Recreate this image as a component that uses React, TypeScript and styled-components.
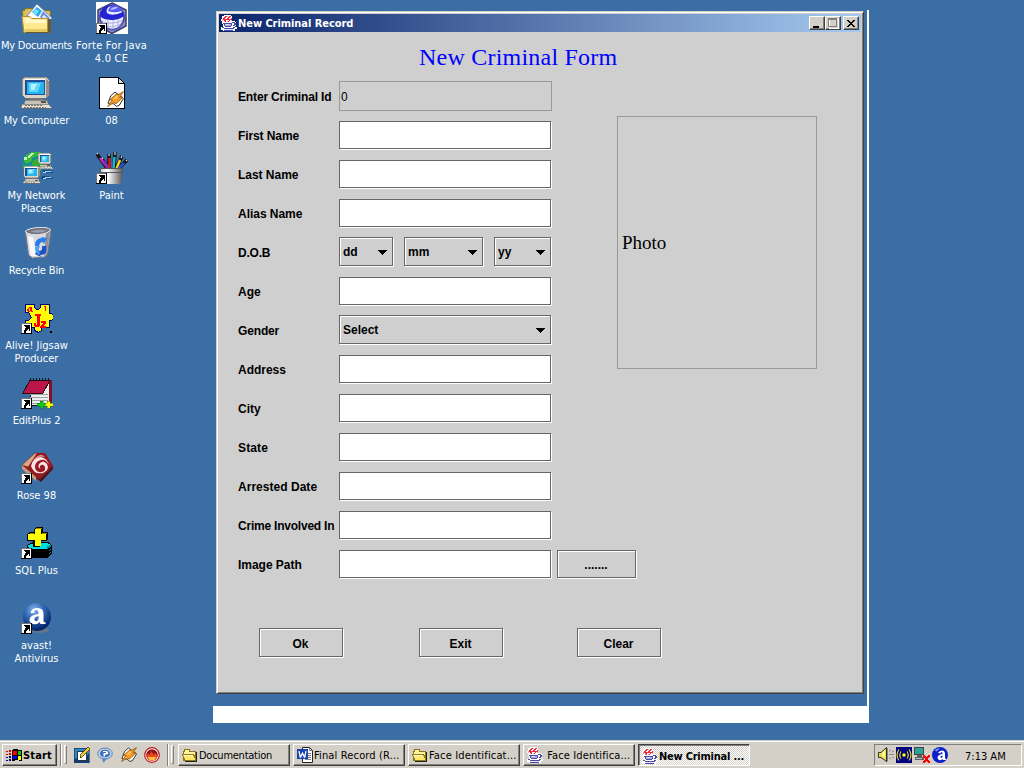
import React from "react";
import styled, { createGlobalStyle, css } from "styled-components";

const ui = `"DejaVu Sans Condensed", "DejaVu Sans", sans-serif`;
const face = "#d4d0c8";
const panel = "#cfcfcf";

const Global = createGlobalStyle`
  * { box-sizing: border-box; }
  body { margin: 0; overflow: hidden; background: #3a6ea5; }
  button, input { font: inherit; color: inherit; margin: 0; padding: 0; border-radius: 0; outline: 0; }
  svg { display: block; flex: none; }
`;

const Screen = styled.div`
  width: 1024px;
  height: 768px;
  display: flex;
  flex-direction: column;
  background: #3a6ea5;
  font: 11px/13px ${ui};
  color: #000;
`;
const Desktop = styled.main`
  height: 740px;
  display: flex;
  align-items: flex-start;
`;
const Shortcuts = styled.div`
  display: grid;
  grid-template-rows: repeat(9, 75px);
  grid-auto-flow: column;
  grid-auto-columns: 75px;
  width: 150px;
  margin-left: -1px;
`;
const Shortcut = styled.div`
  display: flex;
  flex-direction: column;
  align-items: center;
  padding-top: 2px;
  color: #fff;
`;
const ShortcutName = styled.span<{ $track?: number }>`
  margin-top: 5px;
  text-align: center;
  white-space: pre;
  letter-spacing: ${(p) => p.$track ?? 0}px;
`;

const Backdrop = styled.div`
  width: 656px;
  height: 713px;
  margin: 10px 0 0 64px;
  padding: 1px 0 0 3px;
  border-right: 2px solid #fff;
  border-bottom: 17px solid #fff;
`;
const Window = styled.section`
  width: 648px;
  height: 683px;
  padding: 1px;
  border: 1px solid;
  border-color: ${face} #404040 #404040 ${face};
  background: ${panel};
  box-shadow: inset 1px 1px #fff, inset -1px -1px #808080;
`;
const TitleBar = styled.header`
  height: 18px;
  margin: 1px 1px 0 1px;
  padding: 0 2px;
  display: flex;
  align-items: center;
  background: linear-gradient(90deg, #0a246a, #a6caf0);
  color: #fff;
  font-weight: bold;
`;
const TitleText = styled.span`
  flex: 1;
  padding-left: 1px;
  letter-spacing: -0.05px;
`;
const Control = styled.button<{ $gap?: boolean }>`
  width: 16px;
  height: 14px;
  margin-left: ${(p) => (p.$gap ? 2 : 0)}px;
  border: 1px solid;
  border-color: #fff #404040 #404040 #fff;
  box-shadow: inset -1px -1px #808080;
  background: ${face};
`;
const Client = styled.div`
  height: 659px;
  padding: 10px 45px 0 20px;
  font: bold 12px/15px "Liberation Sans", Arial, sans-serif;
`;
const Heading = styled.h1`
  margin: 0 0 9px 181px;
  font: 24px/30px "Liberation Serif", "Times New Roman", serif;
  letter-spacing: 0.22px;
  color: #0000ff;
`;
const Columns = styled.div`
  display: flex;
  justify-content: space-between;
  align-items: flex-start;
`;
const Form = styled.form`
  width: 370px;
  display: grid;
  grid-auto-rows: 39px;
`;
const Row = styled.div`
  display: grid;
  grid-template-columns: 101px 1fr;
  align-items: start;
`;
const Label = styled.label<{ $track?: number }>`
  padding-top: 9px;
  white-space: nowrap;
  letter-spacing: ${(p) => p.$track ?? -0.03}px;
`;
const Controls = styled.div`
  display: flex;
  align-items: flex-start;
`;
const flush = css`
  border: 1px solid #666;
  box-shadow: 1px 1px #fff, inset 1px 1px #fff;
`;
const Field = styled.input`
  width: 212px;
  height: 28px;
  margin-top: 1px;
  background: #fff;
  ${flush}
`;
const IdField = styled.input`
  width: 213px;
  height: 30px;
  border: 1px solid #999;
  padding: 2px 0 0 1px;
  background: ${panel};
  color: #000;
  font-weight: normal;
`;
const Combo = styled.div<{ $w: number; $gap?: number }>`
  width: ${(p) => p.$w}px;
  height: 29px;
  margin-right: ${(p) => p.$gap ?? 0}px;
  padding: 1px 5px 0 3px;
  display: flex;
  align-items: center;
  justify-content: space-between;
  ${flush}
`;
const Push = styled.button<{ $w: number; $h?: number }>`
  width: ${(p) => p.$w}px;
  height: ${(p) => p.$h ?? 29}px;
  padding-top: 3px;
  padding-right: 1px;
  background: ${panel};
  ${flush}
`;
const Browse = styled(Push)`
  margin: 1px 0 0 6px;
`;
const Photo = styled.div`
  width: 200px;
  height: 253px;
  margin-top: 35px;
  padding-left: 4px;
  display: flex;
  align-items: center;
  border: 1px solid #999;
  font: 19px/22px "Liberation Serif", "Times New Roman", serif;
`;
const Actions = styled.div`
  display: flex;
  margin: 40px 0 0 21px;
`;
const Action = styled(Push)<{ $after?: number }>`
  margin-right: ${(p) => p.$after ?? 0}px;
`;

const Taskbar = styled.footer`
  height: 28px;
  display: flex;
  align-items: flex-start;
  padding: 4px 2px 0;
  background: ${face};
  box-shadow: inset 0 1px ${face}, inset 0 2px #fff;
`;
const raised = css`
  border: 1px solid;
  border-color: #fff #404040 #404040 #fff;
  box-shadow: inset -1px -1px #808080;
  background: ${face};
`;
const Start = styled.button`
  width: 55px;
  height: 22px;
  display: flex;
  align-items: center;
  padding-left: 3px;
  font-weight: bold;
  letter-spacing: 0.15px;
  ${raised}
`;
const Divider = styled.i<{ $l: number }>`
  width: 2px;
  height: 22px;
  margin-left: ${(p) => p.$l}px;
  border-left: 1px solid #808080;
  border-right: 1px solid #fff;
`;
const Grip = styled.i`
  width: 3px;
  height: 19px;
  margin: 1px 0 0 2px;
  border: 1px solid;
  border-color: #fff #808080 #808080 #fff;
`;
const Quick = styled.div`
  display: flex;
  width: 93px;
  padding: 3px 0 0 7px;
  justify-content: space-between;
`;
const Tasks = styled.div`
  display: flex;
  gap: 3px;
  margin-left: 4px;
`;
const Task = styled.button<{ $active?: boolean }>`
  width: 112px;
  height: 22px;
  display: flex;
  align-items: center;
  gap: 1px;
  padding-left: 3px;
  white-space: nowrap;
  ${raised}
  ${(p) =>
    p.$active &&
    css`
      font-weight: bold;
      padding-top: 2px;
      border-color: #404040 #fff #fff #404040;
      box-shadow: inset 1px 1px #808080;
      background: repeating-conic-gradient(#fff 0 25%, ${face} 0 50%) 0 0 / 2px 2px;
    `}
`;
const TaskText = styled.span<{ $track?: number }>`
  letter-spacing: ${(p) => p.$track ?? 0}px;
`;
const Tray = styled.div`
  width: 148px;
  height: 22px;
  margin-left: auto;
  display: flex;
  align-items: center;
  gap: 2px;
  padding-left: 3px;
  border: 1px solid;
  border-color: #808080 #fff #fff #808080;
`;
const Clock = styled.time`
  margin: 2px 0 0 15px;
`;

function Icon({ size = 32, smooth, children }: { size?: number; smooth?: boolean; children: React.ReactNode }) {
  return (
    <svg width={size} height={size} viewBox={`0 0 ${size} ${size}`} shapeRendering={smooth ? "auto" : "crispEdges"}>
      {children}
    </svg>
  );
}
const LinkArrow = () => (
  <g shapeRendering="crispEdges">
    <path d="M0 21h11v11H0z" fill="#000" />
    <path d="M0 21h10v10H0z" fill="#fff" />
    <path d="M0 21h11v1H1v9h10v1H0z" fill="#000" opacity=".55" />
    <path d="M3 23h6v6H8v-2H7v1H6v1H5v2H3v-3h1v-2h1v-1H4v-1H3z" fill="#000" />
  </g>
);
const Documents = () => (
  <Icon smooth>
    <path d="M1.500 8.500h2l1-2h7l1 2h16l1 2v20h-27z" fill="#d9c05c" stroke="#86751f" />
    <path d="M6 14L16 2l15 14-8 9z" fill="#fff" stroke="#7187b8" />
    <path d="M11 10l5-5 5 4-4 6z" fill="#2aa8ee" /><path d="M15 7l3 2-3 4-3-3z" fill="#6fe5ff" />
    <path d="M22 9l7 7-4 5-6-6z" fill="#6f93dc" /><path d="M23 13l3 3-2 2-3-3z" fill="#e9f2ff" />
    <path d="M1 14.500h8l2 2h15.500v14H3z" fill="#ffe98e" stroke="#b2943a" />
    <path d="M3 16h5l2 2h15v3H4z" fill="#fff8cc" /><path d="M4 27h22v3H4z" fill="#e6c860" />
    <path d="M27 17h3v12l-2 2H5v-1h22z" fill="#655a31" />
  </Icon>
);
const Monitor = () => (
  <g>
    <path d="M1 2l3-2h21l3 3v15l-3 3H4l-3-3z" fill="#d9d5ca" stroke="#77736d" strokeWidth=".7" />
    <path d="M25 2l3 2v14l-3 2z" fill="#958f87" /><path d="M4 3h20v15H4z" fill="#234e95" />
    <path d="M6 5h17v12H6z" fill="#27b4ec" /><path d="M8 6h12l-3 9H8z" fill="#5fd8fb" />
    <path d="M10 7h6l-3 6h-3z" fill="#b4f4ff" /><path d="M4 2h20v1H4z" fill="#fff" />
    <path d="M8 21h14v3H8z" fill="#77736f" /><path d="M4 23h22l2 5H3z" fill="#c9c4b8" stroke="#666" strokeWidth=".6" />
    <path d="M1 27h26l4 4H0z" fill="#e5e0d2" stroke="#6d6a66" strokeWidth=".7" />
    <path d="M4 28.500h18M3 30.500h22" stroke="#77736f" strokeDasharray="2 1" /><path d="M20 24h5v2h-5z" fill="#555" />
  </g>
);
const Computer = () => <Icon><Monitor /></Icon>;
const Network = () => (
  <Icon>
    <circle cx="11" cy="11" r="10.5" fill="#158a9b" /><path d="M5 3l6-3h8l-2 4-5 1-2 5-5 2-2-2z" fill="#39b83a" />
    <path d="M12 8l6-2 4 6-3 8-4-5-4-2z" fill="#37ad30" /><path d="M3 5h3v3H3zm3 0l5-4h2L8 6z" fill="#c7f4b4" />
    <path d="M1 12l5 2 4 6-7-3z" fill="#2cae4c" />
    <svg x="17" y="1" width="15" height="16" viewBox="0 0 32 32" preserveAspectRatio="none"><Monitor /></svg>
    <svg x="2" y="14" width="19" height="18" viewBox="0 0 32 32" preserveAspectRatio="none"><Monitor /></svg>
    <path d="M22 18h9l-4 2h5v1h-9zM21 24h8l-4 2h7v1H20z" fill="#154a7c" /><path d="M22 21l5-2h3M22 27l5-2h3" stroke="#9edaff" fill="none" />
  </Icon>
);
const Recycle = () => (
  <Icon smooth>
    <path d="M4.500 5l3 23 4 3 12-1 3-3L30 3z" fill="#d8d8de" stroke="#777783" />
    <path d="M7 9l3 20h5L12 10z" fill="#fafafc" /><path d="M25 6l4-2-3 23-3 2z" fill="#908f9c" />
    <path d="M4.500 4q4-3 13-3.500t12 2q-2 4-11 5T4.500 5z" fill="#70717c" stroke="#e6e6ec" />
    <path d="M9 4.500q8-3 17-1-8 4-17 1z" fill="#9c9dab" />
    <path d="M14 19q0-8 7-8l-1-1 6 1-3 6-1-2q-4 0-4 5z" fill="#2b7bea" />
    <path d="M25 19q2 9-6 9l1 2-6-3 3-5 1 2q4 0 3-5z" fill="#1c50c8" /><path d="M14 20l5-1-2 4q0 2 2 2l-1 3q-4-2-4-8z" fill="#45a5f2" />
  </Icon>
);
const Jigsaw = () => (
  <Icon>
    <path d="M4.500 2.500h9v3l2 2h2l2-2v-3h9v9h2l2 2v3l-2 2h-2v7h-8v3l-3 2-4-2v-3h-9v-7h3l3-3-3-5h-3z" fill="#ffff00" stroke="#000080" />
    <path d="M14 12h6v2h-1v9l-2 2h-3l-1-2v-2h2v2h1v-9h-2z" fill="#f00" />
    <path d="M20 19h5v2l-3 3h3v2h-6v-2l3-3h-2zM7 6h1V5h3v4h1v1h-2V9H9v1H7V9H6V7h1zM8 6v3h1V6zM23 4h2v5h-1V5h-1z" fill="#f00" />
    <path d="M29 29h2v2h-2z" /><LinkArrow />
  </Icon>
);
const EditPlus = () => (
  <Icon>
    <path d="M12 3h18v25H8z" fill="#eee" stroke="#111" /><path d="M28 3h3v24h-3z" fill="#840e25" />
    <path d="M9 17.500h18M9 20.500h18M9 23.500h18M9 26.500h18" stroke="#a2a2a2" />
    <path d="M9 3h20l-7 13H2z" fill="#cc103f" stroke="#261016" />
    <path d="M9 4.500h18M8 6.500h18M7 8.500h18M6 10.500h18M5 12.500h18M4 14.500h18" stroke="#872269" strokeDasharray="1 1" />
    <path d="M9.500 1v3M12.500 1v3M15.500 1v3M18.500 1v3M21.500 1v3M24.500 1v3M27.500 1v3" stroke="#111" />
    <path d="M20 24h2v2h2v3h-2v2h-3v-2h-3v-3h3v-2z" fill="#10c91d" stroke="#0a7410" strokeWidth=".5" /><path d="M27 24h2v2h3v3h-3v2h-3v-2h-2v-3h2v-2z" fill="#ff0" stroke="#167b13" strokeWidth=".5" />
    <LinkArrow />
  </Icon>
);
const Rose = () => (
  <Icon smooth>
    <path d="M1 13L14 1h10l8 13-13 13h-6z" fill="#8d1d21" /><path d="M1 13l6 2L19 2l-5-1z" fill="#d7a987" stroke="#6d2a20" strokeWidth=".6" />
    <path d="M1 13l14 12v4L1 17z" fill="#c9997b" /><path d="M16 1h8l8 13-13 12L7 15z" fill="#961a22" />
    <path d="M10 14q2-9 10-9 6 1 8 8-3-6-8-5t-6 6q0 7 7 6 4-1 3-5-2-4-5-1-1 2 1 3-4-1-2-5 4-5 8 0 3 6-4 9-9 2-12-7z" fill="#ffe1df" />
    <path d="M12 8q4-5 9-5l3 2q-7-2-12 3z" fill="#e9a4a4" /><path d="M19 27l13-13v3L20 30l-5-4z" fill="#541014" />
    <LinkArrow />
  </Icon>
);
const Sql = () => (
  <Icon>
    {[24, 21, 18].map((y) => (
      <g key={y}>
        <path d={`M6 ${y}l6-3h15l4 3v3l-5 4H11l-5-3z`} fill="#000" />
        <path d={`M7 ${y}l6-2h13l4 2v1l-5 3H12l-5-2z`} fill="#00e0e0" />
        <path d={`M26 ${y + 1}l4-1v2l-4 2z`} fill="#008c8c" />
      </g>
    ))}
    <path d="M13 2l2-2h7v5h5v7l-2 2h-5v5l-2 1h-6v-6H6V7l2-2h5z" fill="#000" />
    <path d="M15 1h6v1h-6zM9 6h4v1H9zM21 6h5v1h-5z" fill="#9c9200" />
    <path d="M14 2h6v5h5v6h-5v6h-6v-6H7V7h7z" fill="#ff0" />
    <LinkArrow />
  </Icon>
);
const Avast = () => (
  <Icon smooth>
    <defs><radialGradient id="ball" cx=".4" cy=".25" r=".7"><stop stopColor="#86b4ea" /><stop offset=".5" stopColor="#2f66b4" /><stop offset="1" stopColor="#05266b" /></radialGradient></defs>
    <ellipse cx="18" cy="28" rx="10" ry="3" fill="#777" opacity=".7" />
    <circle cx="16" cy="15" r="14" fill="url(#ball)" />
    <path d="M9.500 11q1-5 7-5t6 6v7q0 2 2 1v2h-5l-1-2q-2 3-6 2t-4-4q0-5 9-6 0-4-2-4-3 0-2 3h-4zM17.500 14q-5 1-4 4 2 3 4-1z" fill="#fff" fillRule="evenodd" />
    <LinkArrow />
  </Icon>
);
const Forte = () => (
  <Icon smooth>
    <path d="M0 0h32v32H0z" fill="#fff" />
    <path d="M16 1l14 7v16l-14 7.500L2 24V8z" fill="#8f92ba" stroke="#3b3d70" strokeWidth="1.500" />
    <circle cx="16" cy="15.500" r="12" fill="#eceeff" stroke="#3436b4" strokeWidth="1.500" />
    <path d="M4 14Q4 4 15 3q-6 4-4 8 5 4 16-1l1 4q-5 4-12 4-9 0-12-4z" fill="#2424d2" />
    <path d="M12 9q1-6 8-6 5 2 7 5-7 4-15 1z" fill="#5158f4" /><path d="M14 8q3-4 8-3-2 3-8 3z" fill="#b4baff" />
    <path d="M6 19q9 5 21-1M8 23q8 4 17-1M12 17v9M17 18v9M22 17v8" fill="none" stroke="#a9acdd" strokeWidth=".9" />
    <path d="M5 19q5 9 12 9t10-9" fill="none" stroke="#5a5dc0" strokeWidth="1.500" /><LinkArrow />
  </Icon>
);
const Bolt = () => (
  <g>
    <path d="M3.500 4.500l4-3.500 2 1.500L13.500 5l2 2-4 6.500-2.500 1L6 12l-5-.5z" fill="#fff" stroke="#222" strokeWidth=".9" />
    <path d="M.5 14.500L5 8.500H2.500L8.500 3l2 .5 5-3-3.500 5.500h3L8.500 12l-2-1z" fill="#f59b20" stroke="#8a4d08" strokeWidth=".7" />
    <path d="M5 8l4-4 1.500.5L9 7.500z" fill="#ffc659" />
  </g>
);
const FileIcon = () => (
  <Icon>
    <path d="M3.500.5h19l6 6v25h-25z" fill="#fff" stroke="#000" /><path d="M22.500.5v6h6z" fill="#ddd" stroke="#000" />
    <svg x="11" y="14" width="17" height="17" viewBox="0 0 16 16" shapeRendering="auto"><Bolt /></svg>
  </Icon>
);
const Paint = () => (
  <Icon smooth>
    <g stroke="#161616" strokeWidth="3.600" fill="none">
      <path d="M1 2l10 14" /><path d="M6 7l8 10" /><path d="M13 2v15" /><path d="M19 0l-1 17" /><path d="M26 4l-6 13" /><path d="M31 8l-9 9" />
    </g>
    <g strokeWidth="2.400" fill="none">
      <path d="M4 6l8 10" stroke="#d820d8" /><path d="M8 9l5 8" stroke="#7a30c0" /><path d="M13.500 6v11" stroke="#e31424" />
      <path d="M18.500 5l-1 12" stroke="#18b7d4" /><path d="M24 8l-4 10" stroke="#f3da22" /><path d="M28 11l-7 7" stroke="#2c55e0" />
    </g>
    <path d="M1 1l1 1M6 6l1 1M13 2v2M19 0v3M26 4l-1 2M31 8l-1 1" stroke="#dcdcdc" strokeWidth="1.200" />
    <defs><linearGradient id="cup"><stop stopColor="#c8c8c8" /><stop offset=".3" stopColor="#fff" /><stop offset="1" stopColor="#5e5e5e" /></linearGradient></defs>
    <path d="M6 20h20v9l-2 3H8l-2-3z" fill="url(#cup)" /><path d="M4.500 16.500h22v4h-22z" fill="url(#cup)" stroke="#555" /><LinkArrow />
  </Icon>
);
const Java = () => (
  <Icon size={16}>
    <path d="M1 1h2V0h7v1h1v5h3v1h1v4h-1v1h2v2h-2v2H2v-1H0v-3h2V9H1V6H0V4h1z" fill="#fff" />
    <path d="M2 3h1V2h1V1h2v1H5v1H4v2h1v2H4V6H3V5H2zM6 3h1V2h1V1h2v1H9v1H8v1h2v1H9v1H8v1H7V6h1V5H6zM4 4h2v1H4zM10 3h1v2h-1z" fill="#ee2b3e" />
    <path d="M1 4h1v2H1zM3 6h1v1H3zM6 1h1v1H6zM6 6h1v1H6zM10 5h1v1h-1z" fill="#f7a2aa" />
    <path d="M2 8h9V7h3v1h1v2h-1v1h-2v-1h1V8h-2v3h-1v1H4v-1H3V9H2zM1 12h2v1h9v-1h2v1h-1v1H3v-1H1zM3 15h9v1H3z" fill="#4b4ba8" />
    <path d="M4 9h6v2H4z" fill="#a9a9dc" /><path d="M5 9h3v1H5zM4 14h8v1H4z" fill="#e2e2fa" />
  </Icon>
);
const Flag = () => (
  <svg width="17" height="16" viewBox="0 0 17 16" shapeRendering="crispEdges">
    <path d="M6 3h1V2h5v1h4v11h-3v-1H9v1H6z" fill="#000" />
    <path d="M7 4h4v4H7z" fill="#f00" /><path d="M12 4h3v4h-3z" fill="#0c0" /><path d="M7 9h4v3H7z" fill="#00f" /><path d="M12 9h3v4h-3z" fill="#ff0" />
    <path d="M0 4h2v1H0zm3-1h2v2H3zM0 7h2v1H0zm3-1h2v2H3z" fill="#d00" /><path d="M0 10h2v1H0zm3-1h2v2H3zM0 13h2v1H0zm3-1h2v2H3z" fill="#008" />
  </svg>
);
const Folder = () => (
  <Icon size={16}>
    <path d="M1.500 4.500h1v-2h5v2h6v9h-12z" fill="#fff29a" stroke="#86751f" /><path d="M.5 7.500h11l3 6H3z" fill="#ffe866" stroke="#8c7a1c" />
    <path d="M2 8.500h9" stroke="#fffbd0" /><path d="M14 5h1v10H3v-1h11z" fill="#222" />
  </Icon>
);
const Word = () => (
  <Icon size={16} smooth>
    <path d="M5.500.5h7l3 3v12h-10z" fill="#fff" stroke="#222" /><path d="M12.500 1v2.500H15M8 6.500h6M8 8.500h6M8 10.500h6M8 12.500h6" stroke="#777" fill="none" />
    <path d="M0 2h11v10H0z" fill="#1a3fb4" /><path d="M2 4l1.200 6h.5l1.800-4 1.800 4h.5L9 4" fill="none" stroke="#fff" strokeWidth="1.300" />
  </Icon>
);
const DesktopPad = () => (
  <Icon size={16}>
    <path d="M0 1h15v15H0z" fill="#2b86c6" /><path d="M0 12l15-5v9H0z" fill="#123f7c" /><path d="M0 1h15v15H0z" fill="none" stroke="#0b2b55" strokeWidth=".6" />
    <path d="M3.500 4.500h9v9h-9z" fill="#fff" stroke="#333" /><path d="M6 11l1-4 7-7 2 2-7 7z" fill="#f3ca30" stroke="#332400" strokeWidth=".7" />
  </Icon>
);
const Player = () => (
  <Icon size={16} smooth>
    <ellipse cx="8" cy="6.500" rx="7.300" ry="5.500" fill="#b9d3ee" stroke="#5b80b4" /><path d="M5 11.500h5L6.500 16z" fill="#5b86c4" />
    <ellipse cx="8" cy="6.500" rx="5" ry="3.800" fill="#3f6fb6" /><path d="M6 4h4l1.500 2L10 7.500H8V9.500H6.500V6H9V5H6z" fill="#fff" />
  </Icon>
);
const Burner = () => (
  <Icon size={16} smooth>
    <circle cx="8" cy="8" r="7.300" fill="#fff" stroke="#bb171e" strokeWidth="1.200" /><circle cx="8" cy="8" r="5.800" fill="#8c1519" />
    <path d="M2.500 9l2-3 1 2 2-4 2 4 1.500-2 2.500 3q-1 4.500-5.500 4.700T2.500 9z" fill="#ef481c" /><path d="M4 10h8q-1 3.500-4 3.500T4 10z" fill="#ffc23c" />
  </Icon>
);
const Speaker = () => (
  <Icon size={16} smooth>
    <path d="M.5 5.500H3L8.500.5v14L3 10.500H.5z" fill="#e7dc45" stroke="#222" strokeWidth=".9" /><path d="M4 6l3-3v8L4 9z" fill="#fff8a0" /><path d="M8 1h1.500v13.500H8z" fill="#333" />
    <path d="M11 4.500l2-1.500M11 7.500h5M11 10.500l2 1.500M14 5l2-1M14 10l2 1" stroke="#888" />
  </Icon>
);
const Radio = () => (
  <Icon size={16} smooth>
    <path d="M0 0h16v16H0z" fill="#000080" /><circle cx="8" cy="8" r="1.800" fill="#ff0" />
    <path d="M5 4.500q-2.500 3.500 0 7M11 4.500q2.500 3.500 0 7M3 2.500q-4 5.500 0 11M13 2.500q4 5.500 0 11" fill="none" stroke="#f0ea00" strokeWidth="1.100" />
  </Icon>
);
const NetDown = () => (
  <Icon size={16}>
    <path d="M0 0h10v8H0z" fill="#444" /><path d="M1 1h8v6H1z" fill="#27a397" /><path d="M3 8h5v2H3zM1 10h9v3H1z" fill="#5b6260" /><path d="M2 11h6v1H2z" fill="#bbb" />
    <path d="M9 8h2v1h1v1h1V9h1V8h2v2h-1v1h-1v2h1v1h1v2h-2v-1h-1v-1h-1v1h-1v1H9v-2h1v-1h1v-2h-1v-1H9z" fill="#f00" />
  </Icon>
);
const AvastTray = () => (
  <Icon size={16} smooth>
    <circle cx="8" cy="8" r="8" fill="#0b20c8" /><path d="M3 3q2-2 5-1.500L4 4.500z" fill="#8fb2ff" />
    <path d="M6 6q1-2.500 4-2.500T13 7v4q0 1 1 .5V13h-3l-.5-1q-1 1.500-3 1T5.500 10.500q0-2.500 5-3.500 0-2-1-2T8.500 6.500zM10.500 8.500Q8 9 8.500 10.500q1 1 2-.5z" fill="#fff" fillRule="evenodd" />
  </Icon>
);
const Arrow = ({ w = 10 }: { w?: number }) => (
  <svg width={w} height="5" viewBox="0 0 10 5" preserveAspectRatio="none" shapeRendering="crispEdges"><path d="M0 0h10L5 5z" /></svg>
);

const shortcuts: [string, React.FC, number?][] = [
  ["My Documents", Documents, -0.25],
  ["My Computer", Computer, -0.1],
  ["My Network\nPlaces", Network, -0.1],
  ["Recycle Bin", Recycle, -0.15],
  ["Alive! Jigsaw\nProducer", Jigsaw],
  ["EditPlus 2", EditPlus, -0.1],
  ["Rose 98", Rose],
  ["SQL Plus", Sql],
  ["avast!\nAntivirus", Avast],
  ["Forte For Java\n4.0 CE", Forte, 0.22],
  ["08", FileIcon],
  ["Paint", Paint],
];

function FormRow({ label, track, children }: { label: string; track?: number; children?: React.ReactNode }) {
  return (
    <Row>
      <Label $track={track}>{label}</Label>
      <Controls>{children ?? <Field aria-label={label} />}</Controls>
    </Row>
  );
}

export default function App() {
  return (
    <Screen>
      <Global />
      <Desktop>
        <Shortcuts>
          {shortcuts.map(([name, Glyph, track]) => (
            <Shortcut key={name}>
              <Glyph />
              <ShortcutName $track={track}>{name}</ShortcutName>
            </Shortcut>
          ))}
        </Shortcuts>
        <Backdrop>
          <Window>
            <TitleBar>
              <Java />
              <TitleText>New Criminal Record</TitleText>
              <Control aria-label="Minimize"><svg width="12" height="10" shapeRendering="crispEdges"><path d="M3 8h6v2H3z" /></svg></Control>
              <Control aria-label="Maximize"><svg width="13" height="12" shapeRendering="crispEdges"><path d="M3 2h9v9H3z" fill="none" stroke="#fff" /><path d="M2.500 1.500h8v8h-8zM3 2.500h8" fill="none" stroke="#808080" /></svg></Control>
              <Control $gap aria-label="Close"><svg width="12" height="11" shapeRendering="crispEdges"><path d="M3 2h2v1h1v1h2V3h1V2h2v1h-1v1H9v1H8v1h1v1h1v1h1v1H9V8H8V7H6v1H5v1H3V8h1V7h1V6h1V5H5V4H4V3H3z" /></svg></Control>
            </TitleBar>
            <Client>
              <Heading>New Criminal Form</Heading>
              <Columns>
                <Form>
                  <FormRow label="Enter Criminal Id" track={-0.15}><IdField defaultValue="0" disabled /></FormRow>
                  <FormRow label="First Name" track={-0.1} />
                  <FormRow label="Last Name" />
                  <FormRow label="Alias Name" />
                  <FormRow label="D.O.B" track={-0.2}>
                    <Combo $w={54} $gap={11}>dd<Arrow /></Combo>
                    <Combo $w={79} $gap={11}>mm<Arrow /></Combo>
                    <Combo $w={57}>yy<Arrow w={9} /></Combo>
                  </FormRow>
                  <FormRow label="Age" />
                  <FormRow label="Gender" track={-0.15}><Combo $w={212}>Select<Arrow w={9} /></Combo></FormRow>
                  <FormRow label="Address" />
                  <FormRow label="City" />
                  <FormRow label="State" track={0.15} />
                  <FormRow label="Arrested Date" track={0.03} />
                  <FormRow label="Crime Involved In" track={-0.22} />
                  <FormRow label="Image Path"><Field /><Browse type="button" $w={79} $h={28}>.......</Browse></FormRow>
                </Form>
                <Photo>Photo</Photo>
              </Columns>
              <Actions>
                <Action $w={84} $after={76}>Ok</Action>
                <Action $w={84} $after={74}>Exit</Action>
                <Action $w={84}>Clear</Action>
              </Actions>
            </Client>
          </Window>
        </Backdrop>
      </Desktop>
      <Taskbar>
        <Start><Flag />Start</Start>
        <Divider $l={3} />
        <Grip />
        <Quick><DesktopPad /><Player /><Icon size={16} smooth><Bolt /></Icon><Burner /></Quick>
        <Divider $l={7} />
        <Grip />
        <Tasks>
          <Task><Folder /><TaskText $track={-0.25}>Documentation</TaskText></Task>
          <Task><Word /><TaskText $track={0.15}>Final Record (R...</TaskText></Task>
          <Task><Folder /><TaskText $track={0.15}>Face Identificat...</TaskText></Task>
          <Task><Java /><TaskText $track={0.12}>&nbsp;Face Identifica...</TaskText></Task>
          <Task $active><Java /><TaskText $track={-0.23}>New Criminal ...</TaskText></Task>
        </Tasks>
        <Tray><Speaker /><Radio /><NetDown /><AvastTray /><Clock>7:13 AM</Clock></Tray>
      </Taskbar>
    </Screen>
  );
}
